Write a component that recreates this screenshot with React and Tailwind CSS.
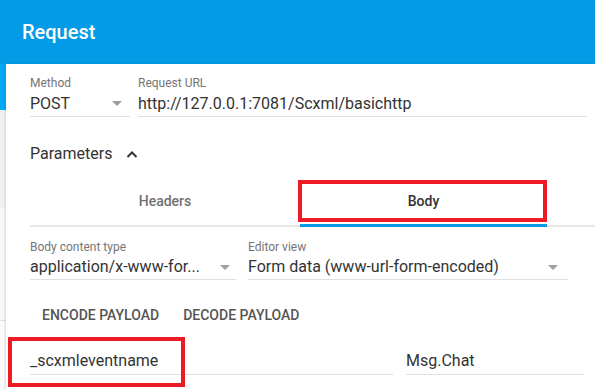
import React from "react";

function Caret() {
  return (
    <svg width="10" height="5" viewBox="0 0 10 5" className="shrink-0">
      <path d="M0 0 L10 0 L5 5 Z" fill="#9e9e9e" />
    </svg>
  );
}

export default function App() {
  return (
    <div
      className="w-[595px] h-[390px] overflow-hidden bg-white flex flex-col"
      style={{ fontFamily: "Roboto, 'Liberation Sans', sans-serif" }}
    >
      <div className="h-[64px] shrink-0 bg-[#039be5] flex items-center pl-[22px]">
        <span className="text-white text-[20px] font-medium leading-none">Request</span>
      </div>
      <div className="flex flex-1 relative">
        <div className="w-[6px] shrink-0 flex flex-col">
          <div className="h-[46px] bg-[#03a9f4]" />
          <div className="h-[98px] bg-[#f0f0f0]" />
          <div className="h-[113px] bg-[#f7f7f7] border-b border-[#e0e0e0]" />
          <div className="flex-1 bg-[#fafafa]" />
        </div>
        <div className="flex-1 bg-white pl-[24px] pt-[11px] shadow-[-1px_0_2px_rgba(0,0,0,0.12)]">
          <div className="flex gap-[8px]">
            <div className="w-[100px]">
              <div className="text-[12px] leading-[16px] text-[#757575]">Method</div>
              <div className="h-[26px] flex items-center justify-between border-b border-[#e0e0e0] pr-[8px]">
                <span className="text-[16px] text-[#333]">POST</span>
                <Caret />
              </div>
            </div>
            <div className="flex-1 mr-[8px]">
              <div className="text-[12px] leading-[16px] text-[#757575]">Request URL</div>
              <div className="h-[26px] flex items-center border-b border-[#e0e0e0]">
                <span className="text-[16px] text-[#333]">http://127.0.0.1:7081/Scxml/basichttp</span>
              </div>
            </div>
          </div>

          <div className="mt-[25px] h-[24px] flex items-center gap-[14px]">
            <span className="text-[16px] text-[#333]">Parameters</span>
            <svg width="12" height="8" viewBox="0 0 12 8">
              <path d="M1.5 7 L6 2.5 L10.5 7" fill="none" stroke="#333" strokeWidth="2" />
            </svg>
          </div>

          <div className="mt-[11px] flex border-b-2 border-[#e6e6e6] h-[50px]">
            <div className="w-[270px] h-[48px] flex items-center justify-center text-[14px] font-medium text-[#707070]">
              Headers
            </div>
            <div className="w-[247px] h-[50px] flex items-center justify-center text-[14px] font-medium text-[#333] border-b-[3px] border-[#039be5] pt-[1px]">
              Body
            </div>
          </div>

          <div className="mt-[12px] flex gap-[12px]">
            <div className="w-[206px]">
              <div className="text-[12px] leading-[16px] text-[#757575]">Body content type</div>
              <div className="h-[25px] flex items-center justify-between border-b border-[#e0e0e0] pr-[6px]">
                <span className="text-[16px] text-[#333]">application/x-www-for...</span>
                <Caret />
              </div>
            </div>
            <div className="w-[320px]">
              <div className="text-[12px] leading-[16px] text-[#757575]">Editor view</div>
              <div className="h-[25px] flex items-center justify-between border-b border-[#e0e0e0] pr-[10px]">
                <span className="text-[16px] text-[#333]">Form data (www-url-form-encoded)</span>
                <Caret />
              </div>
            </div>
          </div>

          <div className="mt-[17px] flex">
            <div className="h-[36px] px-[12px] flex items-center text-[14px] font-medium text-[#555] uppercase">
              Encode payload
            </div>
            <div className="h-[36px] px-[12px] flex items-center text-[14px] font-medium text-[#555] uppercase">
              Decode payload
            </div>
          </div>

          <div className="mt-[14px] flex gap-[13px]">
            <div className="w-[363px] h-[28px] flex items-center border-b border-[#e0e0e0]">
              <span className="text-[16px] text-[#333]">_scxmleventname</span>
            </div>
            <div className="w-[178px] h-[28px] flex items-center border-b border-[#e0e0e0]">
              <span className="text-[16px] text-[#333]">Msg.Chat</span>
            </div>
          </div>
        </div>

        <div className="absolute left-[298px] top-[116px] w-[249px] h-[42px] border-[4px] border-[#ed1c24] pointer-events-none" />
        <div className="absolute left-[8px] top-[273px] w-[177px] h-[50px] border-[4px] border-[#ed1c24] pointer-events-none" />
      </div>
    </div>
  );
}
